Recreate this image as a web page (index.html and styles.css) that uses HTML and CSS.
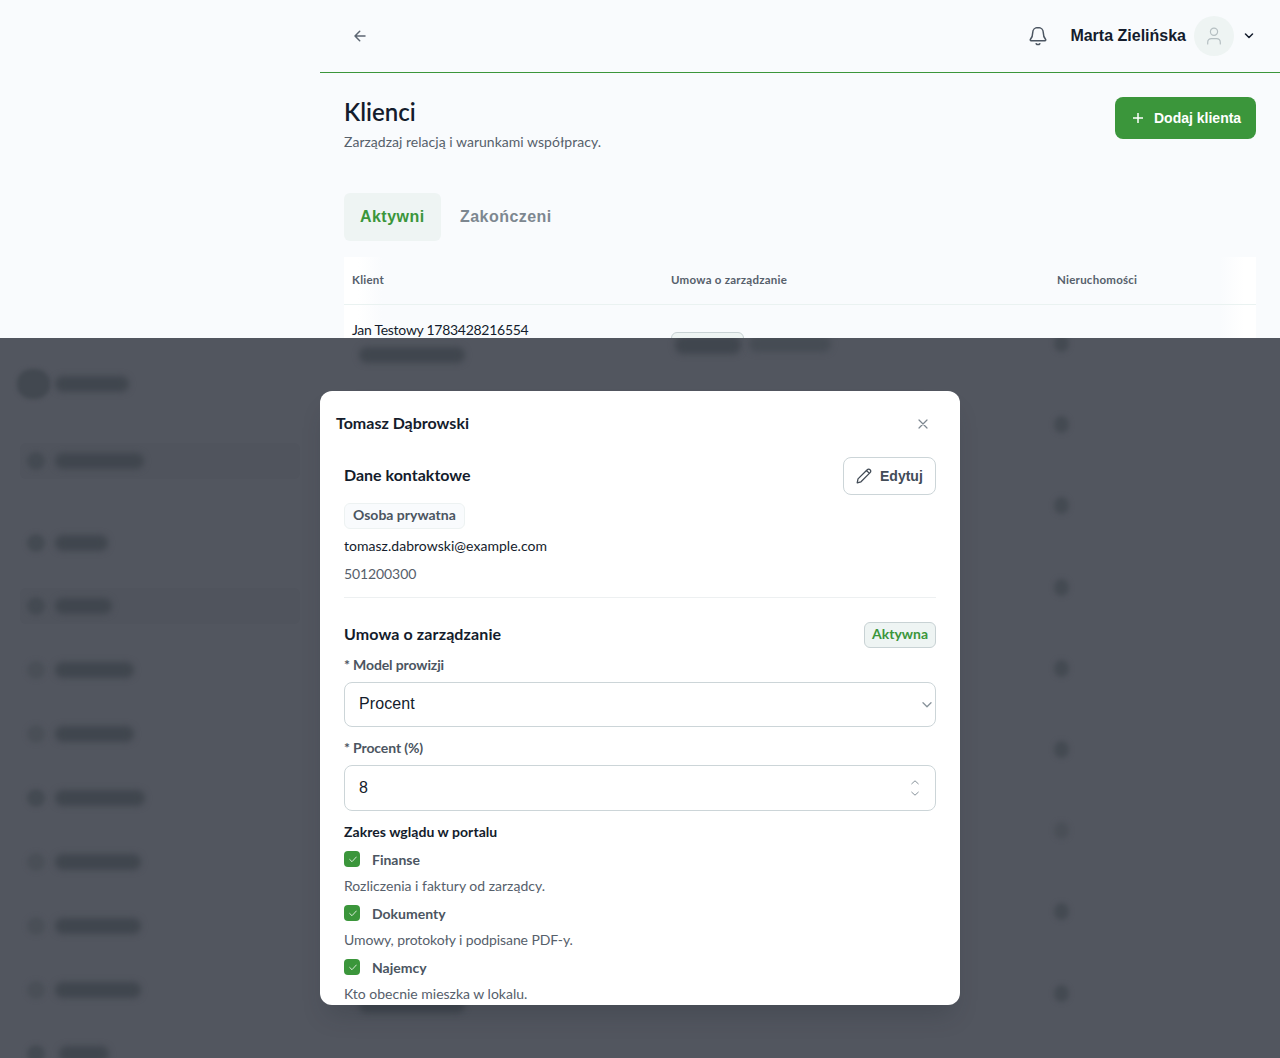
FILE: index.html
```html
<!DOCTYPE html>
<html lang="pl">
<head>
<meta charset="utf-8">
<title>Klienci</title>
<link rel="stylesheet" href="styles.css">
</head>
<body>
<div class="app">
  <div class="main">
    <header class="topbar">
      <svg class="back" width="12" height="12" viewBox="0 0 12 12"><path d="M11 6H1M5.700 1.300 1 6l4.700 4.700"/></svg>
      <div class="user">
        <svg class="bell" width="18" height="20" viewBox="0 0 18 20"><path d="M9 1.500c-3.200 0-5.300 2.300-5.300 5.200 0 3.500-.9 5-2.200 6.600-.5.700-.2 1.400.6 1.400h13.800c.8 0 1.100-.7.600-1.400-1.300-1.600-2.200-3.100-2.200-6.600C14.300 3.800 12.200 1.500 9 1.500zM7.200 17.700c.9 1.200 2.700 1.200 3.600 0"/></svg>
        <span class="username">Marta Zielińska</span>
        <span class="avatar"><svg width="16" height="18" viewBox="0 0 16 18"><circle cx="8" cy="4.700" r="3.600"/><path d="M1.700 17v-1.500c0-2.300 1.500-3.900 3.800-3.900h5c2.300 0 3.800 1.600 3.800 3.900V17"/></svg></span>
        <svg class="caret" width="10" height="6" viewBox="0 0 10 6"><path d="m1.500 1 3.500 3.500L8.500 1"/></svg>
      </div>
    </header>
    <section class="page">
      <div class="page-head">
        <div>
          <h1>Klienci</h1>
          <p class="lead">Zarządzaj relacją i warunkami współpracy.</p>
        </div>
        <button class="add"><svg width="10" height="10" viewBox="0 0 10 10"><path d="M5 0v10M0 5h10"/></svg><span>Dodaj klienta</span></button>
      </div>
      <nav class="tabs"><span class="tab active">Aktywni</span><span class="tab">Zakończeni</span></nav>
      <div class="table">
        <div class="row head"><span>Klient</span><span>Umowa o zarządzanie</span><span>Nieruchomości</span></div>
        <div class="row client"><span class="client-name">Jan Testowy 1783428216554</span><span class="status"></span></div>
      </div>
    </section>
  </div>

  <div class="overlay">
    <div class="ghost-side">
      <div class="ghost-logo"><i class="disc"></i><i class="smear" style="width:74px"></i></div>
      <div class="ghost-item lit first"><i class="dot"></i><i class="smear" style="width:89px"></i></div>
      <div class="ghost-item second"><i class="dot"></i><i class="smear" style="width:53px"></i></div>
      <div class="ghost-item lit"><i class="dot"></i><i class="smear" style="width:57px"></i></div>
      <div class="ghost-item"><i class="dot pale"></i><i class="smear" style="width:79px"></i></div>
      <div class="ghost-item"><i class="dot pale"></i><i class="smear" style="width:79px"></i></div>
      <div class="ghost-item"><i class="dot"></i><i class="smear" style="width:90px"></i></div>
      <div class="ghost-item"><i class="dot pale"></i><i class="smear" style="width:86px"></i></div>
      <div class="ghost-item"><i class="dot pale"></i><i class="smear" style="width:86px"></i></div>
      <div class="ghost-item"><i class="dot pale"></i><i class="smear" style="width:86px"></i></div>
      <div class="ghost-item last"><i class="dot"></i><i class="smear" style="width:50px"></i></div>
    </div>
    <div class="ghost-table">
      <div class="ghost-row"><i class="smear mail"></i><div class="ghost-status"><i class="smear badge-smear"></i><i class="smear note"></i></div><i class="dot count"></i></div>
      <div class="ghost-row"><i class="dot count"></i></div>
      <div class="ghost-row"><i class="dot count"></i></div>
      <div class="ghost-row"><i class="dot count"></i></div>
      <div class="ghost-row"><i class="dot count"></i></div>
      <div class="ghost-row"><i class="dot count"></i></div>
      <div class="ghost-row"><i class="dot count pale"></i></div>
      <div class="ghost-row"><i class="dot count"></i></div>
      <div class="ghost-row"><i class="smear mail"></i><i class="dot count"></i></div>
    </div>
  </div>

  <div class="modal">
    <div class="modal-head">
      <h2>Tomasz Dąbrowski</h2>
      <svg class="close" width="10" height="10" viewBox="0 0 10 10"><path d="m1 1 8 8M9 1 1 9"/></svg>
    </div>
    <div class="modal-body">
      <div class="bar">
        <h3>Dane kontaktowe</h3>
        <button class="edit"><svg width="16" height="16" viewBox="0 0 16 16"><path d="M1.200 14.800 2 10.900 11.200 1.700a1.950 1.950 0 0 1 2.900 0 1.950 1.950 0 0 1 0 2.900L5 13.800zM10.500 2.500l2.900 2.900"/></svg><span>Edytuj</span></button>
      </div>
      <span class="chip">Osoba prywatna</span>
      <p class="mail-text">tomasz.dabrowski@example.com</p>
      <p class="phone">501200300</p>
      <div class="bar contract">
        <h3 class="t-contract">Umowa o zarządzanie</h3>
        <span class="pill">Aktywna</span>
      </div>
      <label class="label">* Model prowizji</label>
      <div class="field select"><span>Procent</span><svg width="10" height="6" viewBox="0 0 10 6"><path d="m1 .7 4 4L9 .7"/></svg></div>
      <label class="label l-percent">* Procent (%)</label>
      <div class="field number"><span>8</span><svg width="8" height="18" viewBox="0 0 8 18"><path d="m.7 4.800 3.300-3 3.300 3M.7 13.200l3.300 3 3.300-3"/></svg></div>
      <h4>Zakres wglądu w portalu</h4>
      <div class="check"><i><svg width="8" height="7" viewBox="0 0 8 7"><path d="m.7 3.500 2.300 2.200L7.300 1"/></svg></i><b>Finanse</b></div>
      <p class="desc">Rozliczenia i faktury od zarządcy.</p>
      <div class="check"><i><svg width="8" height="7" viewBox="0 0 8 7"><path d="m.7 3.500 2.300 2.200L7.300 1"/></svg></i><b>Dokumenty</b></div>
      <p class="desc d-doc">Umowy, protokoły i podpisane PDF-y.</p>
      <div class="check"><i><svg width="8" height="7" viewBox="0 0 8 7"><path d="m.7 3.500 2.300 2.200L7.300 1"/></svg></i><b>Najemcy</b></div>
      <p class="desc">Kto obecnie mieszka w lokalu.</p>
    </div>
  </div>
</div>
</body>
</html>
```
FILE: styles.css
```css
* { box-sizing: border-box; }
body { margin: 0; background: #f9fbfd; color: #141c2c; font-family: Lato, "Liberation Sans", sans-serif; font-size: 14px; }
h1, h2, h3, h4, p { margin: 0; }
svg { display: block; flex: none; fill: none; stroke: currentColor; stroke-width: 1.5; stroke-linecap: round; stroke-linejoin: round; }
button { font: inherit; padding: 0; }
span, b, h1, h2, h3, h4, p { white-space: nowrap; }

.app { position: relative; height: 1058px; overflow: hidden; }
.main { margin-left: 320px; }

.topbar { display: flex; justify-content: space-between; align-items: center; height: 73px; padding: 0 26px 1px 34px; border-bottom: 1px solid #3b963b; }
.back { color: #5c6672; }
.user { display: flex; align-items: center; }
.bell { color: #4b5561; margin-right: 23px; }
.username { font: bold 16px/20px "Liberation Sans", sans-serif; margin-right: 8px; }
.avatar { display: grid; place-items: center; width: 40px; height: 40px; margin-right: 10px; border-radius: 50%; background: #eef4f3; color: #b5bfc2; }
.avatar svg { stroke-width: 1.200; }

.page { padding: 24px 24px 0; }
.page-head { display: flex; justify-content: space-between; align-items: flex-start; height: 96px; }
h1 { font-size: 24px; line-height: 30px; font-weight: 600; }
.lead { margin-top: 6px; line-height: 18px; letter-spacing: .025px; color: #56606b; }
.add { display: flex; align-items: center; gap: 11px; width: 141px; height: 42px; padding-left: 18px; border: 0; border-radius: 8px; background: #3b963b; color: #fff; font: bold 14px "Liberation Sans", sans-serif; }
.tabs { display: flex; height: 48px; gap: 3px; font: bold 16px/48px "Liberation Sans", sans-serif; letter-spacing: .46px; }
.tab { padding: 0 16px; border-radius: 6px; color: #7d8790; }
.tab.active { width: 97px; background: #eef4f3; color: #3b963b; }

.table { margin-top: 16px; background: linear-gradient(90deg, #fff 0, #fff 14px, #f9fbfd 38px, #f9fbfd 876px, #fff 900px); }
.row { display: grid; grid-template-columns: 319px 386px 207px; }
.row > span { margin-left: 8px; }
.head { height: 48px; border-bottom: 1px solid #eaf2f1; font-size: 11.5px; line-height: 45px; letter-spacing: .25px; font-weight: 700; color: #56606b; }
.client { height: 81px; padding-top: 15px; }
.client-name { line-height: 20px; letter-spacing: -.28px; }
.status { width: 73px; height: 26px; margin-top: 12px; border: 1px solid #c8d2d4; border-radius: 6px; background: #eef4f3; }

.overlay { position: absolute; left: 0; top: 338px; width: 1280px; height: 720px; display: flex; overflow: hidden; background: #52565f; }
.overlay i { display: block; flex: none; }
.ghost-side { width: 320px; padding-top: 28px; }
.ghost-logo { display: flex; align-items: center; gap: 5px; height: 36px; margin-left: 17px; }
.disc { width: 33px; height: 30px; border-radius: 45%; background: #424850; filter: blur(2px); }
.smear { height: 16px; border-radius: 8px; background: #40464e; filter: blur(3px); }
.ghost-item { display: flex; align-items: center; gap: 10px; height: 36px; margin: 0 20px 28px; padding-left: 7px; }
.ghost-item.first { margin-top: 41px; margin-bottom: 46px; }
.ghost-item.second { margin-bottom: 27px; }
.ghost-item.last { gap: 14px; }
.lit { background: #50545d; border-radius: 6px; }
.dot { width: 18px; height: 18px; border-radius: 50%; background: #444a52; filter: blur(2.5px); }
.dot.pale { background: #4a4f57; }
.ghost-table { width: 960px; padding-top: 5px; }
.ghost-row { display: grid; grid-template-columns: 327px 386px 207px; height: 81.200px; margin-left: 24px; }
.mail { grid-column: 1; width: 106px; margin: 4px 0 0 15px; }
.ghost-status { grid-column: 2; display: flex; gap: 8px; }
.badge-smear { width: 66px; height: 18px; margin-left: 4px; margin-top: -7px; }
.note { width: 82px; height: 16px; margin-top: -7px; background: #464c54; }
.count { grid-column: 3; grid-row: 1; width: 15px; height: 17px; margin: -8px 0 0 -3px; }

.modal { position: absolute; left: 320px; top: 391px; width: 640px; height: 614px; overflow: hidden; border-radius: 12px; background: #fff; box-shadow: 0 16px 24px -8px rgba(30, 38, 46, .25); }
.modal-head { display: flex; justify-content: space-between; align-items: center; height: 66px; padding: 0 32px 0 16px; }
.close { color: #7d8790; stroke-width: 1.200; }
h2, h3 { height: 20px; font-size: 16px; line-height: 18px; font-weight: 700; }
.t-contract { letter-spacing: .12px; }
.modal-body { display: flex; flex-direction: column; padding: 0 24px; }
.bar { display: flex; justify-content: space-between; align-items: center; height: 38px; }
.edit { display: flex; align-items: center; gap: 8px; width: 93px; height: 38px; padding-left: 12px; border: 1px solid #ccd5d8; border-radius: 8px; background: #fff; color: #434c57; font: bold 14px "Liberation Sans", sans-serif; }
.edit svg { stroke-width: 1.300; }
.chip { align-self: flex-start; width: 121px; height: 26px; margin-top: 8px; border: 1px solid #edf2f2; border-radius: 6px; background: #f9fbfd; color: #4b5561; font-weight: 700; line-height: 22px; padding-left: 8px; }
.mail-text { height: 20px; margin-top: 8px; line-height: 18px; letter-spacing: .03px; }
.phone { height: 33px; margin-top: 8px; border-bottom: 1px solid #edf0f1; line-height: 18px; letter-spacing: -.1px; color: #56606b; }
.contract { height: 26px; margin-top: 24px; }
.pill { width: 72px; height: 26px; padding-left: 7px; border: 1px solid #c8d2d4; border-radius: 6px; background: #eef4f3; color: #3b963b; font-weight: 700; line-height: 22px; }
.label { margin-top: 8px; height: 20px; line-height: 18px; letter-spacing: -.12px; font-weight: 700; color: #4b5561; }
.field { display: flex; justify-content: space-between; align-items: center; margin-top: 6px; height: 45px; padding-left: 14px; border: 1px solid #ccd5d8; border-radius: 8px; font: 16px "Liberation Sans", sans-serif; }
.field svg { color: #87929a; stroke-width: 1.300; }
.select { padding-right: 3px; }
.select span { margin-top: -2px; letter-spacing: .1px; }
.l-percent { margin-top: 12px; }
.number { height: 46px; padding-right: 16px; }
.number svg { stroke-width: 1; }
h4 { height: 20px; margin-top: 12px; font-size: 14px; line-height: 18px; letter-spacing: .05px; }
.check { display: flex; gap: 12px; height: 24px; margin-top: 8px; color: #4b5561; line-height: 18px; }
.check i { display: grid; place-items: center; width: 16px; height: 16px; padding-left: 2px; border-radius: 4px; background: #3b963b; color: #fff; }
.check svg { stroke-width: .8; }
.desc { height: 22px; line-height: 22px; color: #56606b; }
.d-doc { letter-spacing: -.1px; }
```
